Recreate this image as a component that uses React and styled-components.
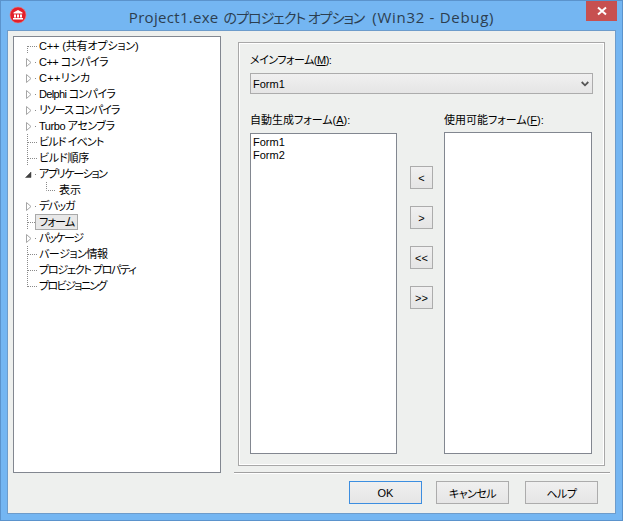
import React from 'react';
import styled, { createGlobalStyle } from 'styled-components';

const Global = createGlobalStyle`
  html, body {
    margin: 0;
    padding: 0;
    background: #74b6f2;
  }
  * {
    box-sizing: border-box;
  }
`;

const FONT = `"Liberation Sans", "Noto Sans CJK JP", sans-serif`;

const Frame = styled.div`
  width: 623px;
  height: 521px;
  background: #74b6f2;
  border: 1px solid #5b93cc;
  display: flex;
  flex-direction: column;
  padding: 0 6px 6px 6px;
  font-family: ${FONT};
  font-size: 11px;
  font-feature-settings: "palt";
  color: #000;
`;

const TitleBar = styled.div`
  height: 29px;
  flex: none;
  display: grid;
  grid-template-columns: 1fr auto 1fr;
  align-items: start;
`;

const AppIcon = styled.svg`
  width: 18px;
  height: 18px;
  margin: 5px 0 0 2px;
  display: block;
`;

const Title = styled.div`
  font-family: "Open Sans", "Noto Sans CJK JP", sans-serif;
  font-size: 15px;
  line-height: 20px;
  margin-top: 6px;
  color: #2c3e50;
  white-space: nowrap;
  letter-spacing: 0.3px;
`;

const TitleJa = styled.span`
  font-size: 14px;
  letter-spacing: -1px;
  margin: 0 8px 0 5px;
`;

const TitleTail = styled.span`
  letter-spacing: 0.7px;
`;

const CloseButton = styled.div`
  justify-self: end;
  width: 31px;
  height: 20px;
  margin-right: -1px;
  background: #c75050;
  display: flex;
  align-items: center;
  justify-content: center;
`;

const Client = styled.div`
  flex: 1;
  background: #eef0ee;
  border: 1px solid #6d9ccb;
  padding: 5px 5px 0 5px;
  display: flex;
  gap: 13px;
`;

const TreePanel = styled.div`
  width: 208px;
  height: 437px;
  background: #fff;
  border: 1px solid #828790;
  padding: 1px 0 0 0;
  flex: none;
`;

const Row = styled.div`
  height: 16px;
  display: flex;
  align-items: center;
  white-space: nowrap;
  padding-left: ${p => (p.$child ? 20 : 0)}px;
`;

const Gutter = styled.svg`
  width: 25px;
  height: 16px;
  flex: none;
  display: block;
`;

const Label = styled.span`
  line-height: 16px;
  height: 16px;
  letter-spacing: ${p => p.$spacing}px;
  padding: 0 ${p => (p.$selected ? 3 : 0)}px;
  margin-left: ${p => (p.$selected ? -4 : 0)}px;
  ${p => p.$selected && `
    background: #e8e8e8;
    border: 1px solid #a9a9a9;
    line-height: 14px;
  `}
`;

const RightColumn = styled.div`
  width: 376px;
  flex: none;
  display: flex;
  flex-direction: column;
`;

const Group = styled.div`
  height: 424px;
  margin: 6px 5px 0 4px;
  border: 1px solid #a8a8a8;
  box-shadow: inset 0 0 0 1px #fff;
  padding: 9px 11px 0 11px;
  display: flex;
  flex-direction: column;
`;

const FieldLabel = styled.div`
  height: 16px;
  line-height: 16px;
  font-size: 11px;
  letter-spacing: ${p => p.$spacing || 0}px;
`;

const ComboBox = styled.div`
  width: 343px;
  height: 21px;
  margin-top: 5px;
  border: 1px solid #acacac;
  background: linear-gradient(#f0f0f0, #e5e5e5);
  display: flex;
  align-items: center;
  justify-content: space-between;
  padding: 0 3px 0 2px;
`;

const ListsRow = styled.div`
  display: flex;
  margin-top: 18px;
`;

const ListColumn = styled.div`
  width: ${p => p.$width}px;
  flex: none;
  display: flex;
  flex-direction: column;
`;

const ListBox = styled.div`
  height: ${p => p.$height}px;
  margin-top: ${p => p.$gap}px;
  background: #fff;
  border: 1px solid #828790;
  padding: 2px 2px;
  line-height: 13px;
`;

const MoveButtons = styled.div`
  width: 23px;
  margin: 54px 11px 0 13px;
  flex: none;
  display: flex;
  flex-direction: column;
  gap: 17px;
`;

const Button = styled.button`
  font-family: ${FONT};
  font-size: 11px;
  font-feature-settings: "palt";
  letter-spacing: ${p => p.$spacing || 0}px;
  color: #000;
  width: ${p => p.$width || 73}px;
  height: 23px;
  padding: 0;
  border: 1px solid ${p => (p.$default ? '#3c8ee0' : '#acacac')};
  background: linear-gradient(#f0f0f0, #e5e5e5);
`;

const Separator = styled.div`
  height: 2px;
  margin-top: 6px;
  background: #a0a0a0;
  border-bottom: 1px solid #fff;
`;

const Footer = styled.div`
  display: flex;
  justify-content: flex-end;
  margin-top: 7px;
  padding-right: 12px;
  gap: 14px;
`;

const HelpButton = styled(Button)`
  margin-left: 2px;
`;

const Underlined = styled.span`
  text-decoration: underline;
`;

const DOT = '#8a8a8a';

// kind: closed / open は展開マーカーの行。マーカーの行には縦線が出ない
function TreeGutter({ kind, edge }) {
  if (kind) {
    return (
      <Gutter viewBox="0 0 25 16">
        <path d="M21 8.5H23" stroke={DOT} strokeDasharray="1 1" fill="none" />
        {kind === 'closed' && <path d="M12.5 4.5L17 8.5L12.5 12.5Z" fill="#fff" stroke="#a6a6a6" />}
        {kind === 'open' && <path d="M11.5 11.5H17V6Z" fill="#404040" stroke="#404040" strokeWidth="0.5" />}
      </Gutter>
    );
  }
  return (
    <Gutter viewBox="0 0 25 16">
      <path d={`M13.5 ${edge === 'first' ? 8 : 0}V${edge === 'last' ? 9 : 16}`} stroke={DOT} strokeDasharray="1 1" fill="none" />
      <path d="M14 8.5H24" stroke={DOT} strokeDasharray="1 1" fill="none" />
    </Gutter>
  );
}

function ChildGutter() {
  return (
    <Gutter viewBox="0 0 25 16">
      <path d="M12.5 0V8.5H22" stroke={DOT} strokeDasharray="1 1" fill="none" />
    </Gutter>
  );
}

// spacing は元のビットマップフォントの字幅に合わせた値
const items = [
  { text: 'C++ (共有オプション)', edge: 'first', spacing: -0.15 },
  { text: 'C++ コンパイラ', kind: 'closed', spacing: -0.5 },
  { text: 'C++リンカ', kind: 'closed', spacing: 0.3 },
  { text: 'Delphi コンパイラ', kind: 'closed', spacing: -0.65 },
  { text: 'リソース コンパイラ', kind: 'closed', spacing: -1.1 },
  { text: 'Turbo アセンブラ', kind: 'closed', spacing: -0.45 },
  { text: 'ビルド イベント', spacing: -0.85 },
  { text: 'ビルド順序', spacing: -0.2 },
  { text: 'アプリケーション', kind: 'open', spacing: -1.35 },
  { text: '表示', child: true, spacing: 0 },
  { text: 'デバッガ', kind: 'closed', spacing: -1.1 },
  { text: 'フォーム', selected: true, spacing: -0.8 },
  { text: 'パッケージ', kind: 'closed', spacing: -1.4 },
  { text: 'バージョン情報', spacing: -0.45 },
  { text: 'プロジェクト プロパティ', spacing: -1.2 },
  { text: 'プロビジョニング', edge: 'last', spacing: -1.6 },
];

const App = () => {
  return (
    <>
      <Global />
      <Frame>
        <TitleBar>
          <AppIcon viewBox="0 0 18 18">
            <circle cx="9" cy="9" r="8" fill="#e3202b" stroke="#f07a7a" strokeWidth="0.6" />
            <path d="M4.5 6.5L9 4L13.5 6.5V7.5H4.5Z M5 8.5H7V11.5H5Z M8 8.5H10V11.5H8Z M11 8.5H13V11.5H11Z M4 12H14V13.5H4Z" fill="#fff" />
          </AppIcon>
          <Title>Project1.exe<TitleJa>のプロジェクト オプション</TitleJa><TitleTail>(Win32 - Debug)</TitleTail></Title>
          <CloseButton>
            <svg width="10" height="10" viewBox="0 0 10 10">
              <path d="M1 1.5L9 8.5M9 1.5L1 8.5" stroke="#fff" strokeWidth="2" />
            </svg>
          </CloseButton>
        </TitleBar>
        <Client>
          <TreePanel>
            {items.map(item => (
              <Row key={item.text} $child={item.child}>
                {item.child ? <ChildGutter /> : <TreeGutter kind={item.kind} edge={item.edge} />}
                <Label $selected={item.selected} $spacing={item.spacing}>{item.text}</Label>
              </Row>
            ))}
          </TreePanel>
          <RightColumn>
            <Group>
              <FieldLabel $spacing={-0.5}>メインフォーム(<Underlined>M</Underlined>):</FieldLabel>
              <ComboBox>
                Form1
                <svg width="8" height="6" viewBox="0 0 8 6">
                  <path d="M0.7 1L4 4.3L7.3 1" stroke="#555" strokeWidth="1.8" fill="none" />
                </svg>
              </ComboBox>
              <ListsRow>
                <ListColumn $width={147}>
                  <FieldLabel>自動生成フォーム(<Underlined>A</Underlined>):</FieldLabel>
                  <ListBox $height={321} $gap={5}>
                    <div>Form1</div>
                    <div>Form2</div>
                  </ListBox>
                </ListColumn>
                <MoveButtons>
                  <Button $width={23}>&lt;</Button>
                  <Button $width={23}>&gt;</Button>
                  <Button $width={23}>&lt;&lt;</Button>
                  <Button $width={23}>&gt;&gt;</Button>
                </MoveButtons>
                <ListColumn $width={148}>
                  <FieldLabel>使用可能フォーム(<Underlined>F</Underlined>):</FieldLabel>
                  <ListBox $height={322} $gap={4} />
                </ListColumn>
              </ListsRow>
            </Group>
            <Separator />
            <Footer>
              <Button $default>OK</Button>
              <Button $spacing={-0.5}>キャンセル</Button>
              <HelpButton $spacing={-0.5}>ヘルプ</HelpButton>
            </Footer>
          </RightColumn>
        </Client>
      </Frame>
    </>
  );
};

export default App;
